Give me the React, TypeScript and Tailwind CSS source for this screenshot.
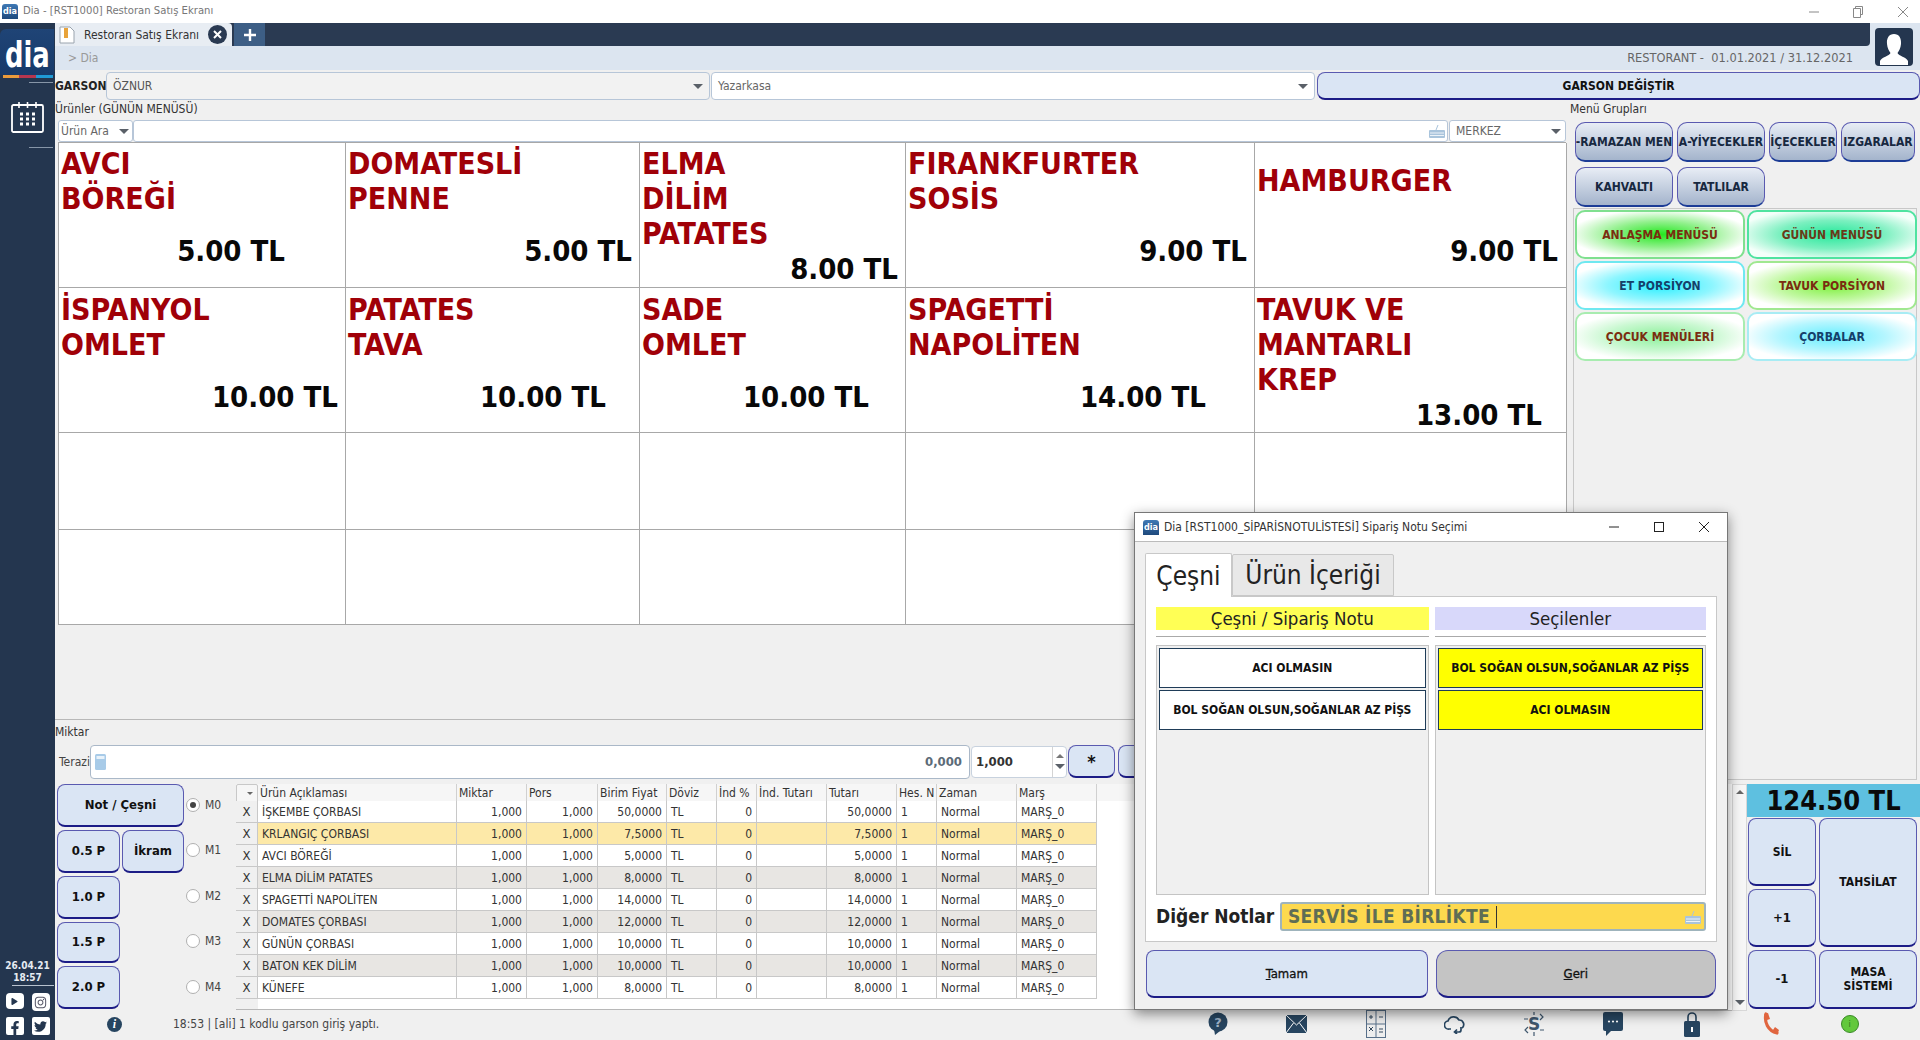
import { FaFacebookF, FaInstagram, FaPlay, FaTwitter } from "react-icons/fa";

const products = [
  { lines: ["AVCI", "BÖREĞİ"], price: "5.00 TL", cls: "pr-[60px]", top: "mt-0", gap: "mt-[18px]" },
  { lines: ["DOMATESLİ", "PENNE"], price: "5.00 TL", cls: "pr-[7px]", top: "mt-0", gap: "mt-[18px]" },
  { lines: ["ELMA", "DİLİM", "PATATES"], price: "8.00 TL", cls: "pr-[7px]", top: "mt-0", gap: "mt-px" },
  { lines: ["FIRANKFURTER", "SOSİS"], price: "9.00 TL", cls: "pr-[7px]", top: "mt-0", gap: "mt-[18px]" },
  { lines: ["HAMBURGER"], price: "9.00 TL", cls: "pr-[8px]", top: "mt-[17px]", gap: "mt-[36px]" },
  { lines: ["İSPANYOL", "OMLET"], price: "10.00 TL", cls: "pr-[7px]", top: "mt-px", gap: "mt-[18px]" },
  { lines: ["PATATES", "TAVA"], price: "10.00 TL", cls: "pr-[33px]", top: "mt-px", gap: "mt-[18px]" },
  { lines: ["SADE", "OMLET"], price: "10.00 TL", cls: "pr-[36px]", top: "mt-px", gap: "mt-[18px]" },
  { lines: ["SPAGETTİ", "NAPOLİTEN"], price: "14.00 TL", cls: "pr-[48px]", top: "mt-px", gap: "mt-[18px]" },
  { lines: ["TAVUK VE", "MANTARLI", "KREP"], price: "13.00 TL", cls: "pr-[24px]", top: "mt-px", gap: "mt-px" },
];

const groups = [
  [
    { label: "-RAMAZAN MEN", cls: "w-[98px] justify-center" },
    { label: "A-YİYECEKLER", cls: "w-[88px] justify-center" },
    { label: "İÇECEKLER", cls: "w-[68px] justify-center" },
    { label: "IZGARALAR", cls: "w-[74px] justify-center" },
  ],
  [
    { label: "KAHVALTI", cls: "w-[98px] justify-center" },
    { label: "TATLILAR", cls: "w-[88px] justify-center" },
  ],
];

const menus = [
  { label: "ANLAŞMA MENÜSÜ", cls: "border-[#7fe08f] bg-[radial-gradient(ellipse_at_center,#22e81e_0%,#8ff08a_40%,#ffffff_78%)] text-[#7a2c10]" },
  { label: "GÜNÜN MENÜSÜ", cls: "border-[#4fe3a0] bg-[radial-gradient(ellipse_at_center,#25e89a_0%,#7cf0c0_45%,#f4fffa_82%)] text-[#6a3a18]" },
  { label: "ET PORSİYON", cls: "border-[#6fe8f0] bg-[radial-gradient(ellipse_at_center,#27efff_0%,#8ef6ff_45%,#ffffff_80%)] text-[#15406a]" },
  { label: "TAVUK PORSİYON", cls: "border-[#a0e890] bg-[radial-gradient(ellipse_at_center,#7cf03a_0%,#c0f8a0_45%,#ffffff_80%)] text-[#7a2c10]" },
  { label: "ÇOCUK MENÜLERİ", cls: "border-[#a8ecb0] bg-[radial-gradient(ellipse_at_center,#8cf09a_0%,#c8f8d0_45%,#ffffff_78%)] text-[#7a2c10]" },
  { label: "ÇORBALAR", cls: "border-[#a8ecf4] bg-[radial-gradient(ellipse_at_center,#66eeff_0%,#b4f6ff_45%,#ffffff_78%)] text-[#15406a]" },
];

const columns = ["Ürün Açıklaması", "Miktar", "Pors", "Birim Fiyat", "Döviz", "İnd %", "İnd. Tutarı", "Tutarı", "Hes. N", "Zaman", "Marş"];

const orders = [
  { name: "İŞKEMBE ÇORBASI", price: "50,0000", bg: "bg-white" },
  { name: "KRLANGIÇ ÇORBASI", price: "7,5000", bg: "bg-[#fde9a8]" },
  { name: "AVCI BÖREĞİ", price: "5,0000", bg: "bg-white" },
  { name: "ELMA DİLİM PATATES", price: "8,0000", bg: "bg-[#e8e6e3]" },
  { name: "SPAGETTİ NAPOLİTEN", price: "14,0000", bg: "bg-white" },
  { name: "DOMATES ÇORBASI", price: "12,0000", bg: "bg-[#e8e6e3]" },
  { name: "GÜNÜN ÇORBASI", price: "10,0000", bg: "bg-white" },
  { name: "BATON KEK DİLİM", price: "10,0000", bg: "bg-[#e8e6e3]" },
  { name: "KÜNEFE", price: "8,0000", bg: "bg-white" },
];

const gridCols = "grid grid-cols-[22px_199px_70px_71px_69px_50px_40px_70px_70px_40px_80px_80px]";
const cell = "flex items-center border-r border-b border-[#c8c8c8] px-1 text-[12px] text-[#333] truncate";
const blueBtn = "flex items-center justify-center rounded-lg border border-[#5a5ab0] border-b-2 border-b-[#1c1c86] bg-[#dae5f4] font-bold text-[#111]";
const Tri = () => <span className="block h-0 w-0 border-x-[5px] border-t-[5px] border-x-transparent border-t-[#5a6068]" />;

function DiaMark({ className }: { className: string }) {
  return (
    <div className={`flex items-center justify-center rounded-t-[3px] bg-gradient-to-b from-[#3f79b5] to-[#1f4a7d] font-bold leading-none text-white ${className}`}>
      dia
    </div>
  );
}

function Keyboard({ color = "#a9c4dc" }: { color?: string }) {
  return (
    <svg width="16" height="14" viewBox="0 0 16 14">
      <path d="M9 1 L7 6" stroke={color} fill="none" />
      <rect x="0" y="6" width="16" height="8" rx="1" fill={color} />
      <path d="M1 9h14M1 11.5h14" stroke="#ffffff" strokeWidth="0.8" />
    </svg>
  );
}

function Radio({ label, on }: { label: string; on?: boolean }) {
  return (
    <div className="flex h-[45.5px] items-center">
      <span className="ml-[2px] flex h-[14px] w-[14px] items-center justify-center rounded-full border border-[#b0b0b0] bg-white">
        {on && <span className="h-[6px] w-[6px] rounded-full bg-[#444]" />}
      </span>
      <span className="ml-[5px] text-[12px] text-[#444]">{label}</span>
    </div>
  );
}

function StatusIcons() {
  const navy = "#274560";
  return (
    <div className="flex items-center">
      <div className="flex w-[79px] justify-center">
        <svg width="20" height="24" viewBox="0 0 20 24">
          <circle cx="10" cy="10" r="9.5" fill={navy} />
          <path d="M6 17l1 6 5-4z" fill={navy} />
          <text x="10" y="15" textAnchor="middle" fontSize="13" fontWeight="bold" fill="#9fb4c8" fontFamily="DejaVu Sans">?</text>
        </svg>
      </div>
      <div className="flex w-[79px] justify-center">
        <svg width="21" height="18" viewBox="0 0 21 18">
          <rect width="21" height="18" fill={navy} />
          <path d="M0 0l10.5 10L21 0M0 18l7.5-10M21 18l-7.5-10" stroke="#fff" fill="none" />
        </svg>
      </div>
      <div className="flex w-[79px] justify-center">
        <svg width="20" height="28" viewBox="0 0 20 28">
          <rect x="0.5" y="0.5" width="19" height="27" fill="#eee" stroke="#58708a" />
          <path d="M10 0v28M0 14h20" stroke="#58708a" />
          <path d="M3 7h4M5 5v4M13 7h4M3 21l4-4M7 21l-4-4M13 19h4M13 22h4" stroke="#33485e" />
        </svg>
      </div>
      <div className="flex w-[79px] justify-center">
        <svg width="22" height="20" viewBox="0 0 22 20" fill="none" stroke={navy} strokeWidth="1.7">
          <path d="M7 15H5a4 4 0 0 1-1-8 6 6 0 0 1 11-1 4.5 4.5 0 0 1 3 8" />
          <path d="M17 13v3a2 2 0 0 1-2 2h-4M13 15.500l-2.500 2.500 2.500 2" />
        </svg>
      </div>
      <div className="flex w-[79px] justify-center">
        <svg width="22" height="24" viewBox="0 0 22 24" fill="none" stroke="#40586e" strokeWidth="1.2">
          <text x="11" y="18" textAnchor="middle" fontSize="17" fontWeight="bold" fill="#40586e" stroke="none" fontFamily="DejaVu Sans">S</text>
          <path d="M1 7h4M17 2l3 3-3 3M5 15l-3 3 3 3M17 18h4M11 0v3M11 20v4" />
        </svg>
      </div>
      <div className="flex w-[79px] justify-center">
        <svg width="20" height="24" viewBox="0 0 20 24">
          <rect width="20" height="19" rx="2" fill={navy} />
          <path d="M3 18v6l6-6z" fill={navy} />
          <circle cx="6" cy="9.500" r="1.100" fill="#fff" />
          <circle cx="10" cy="9.500" r="1.100" fill="#fff" />
          <circle cx="14" cy="9.500" r="1.100" fill="#fff" />
        </svg>
      </div>
      <div className="flex w-[79px] justify-center">
        <svg width="16" height="26" viewBox="0 0 16 26">
          <path d="M4 11V6a4 4 0 0 1 8 0v5" fill="none" stroke={navy} strokeWidth="1.600" />
          <rect y="10" width="16" height="16" rx="1.500" fill={navy} />
          <rect x="7" y="16" width="2" height="5" fill="#fff" />
        </svg>
      </div>
      <div className="flex w-[79px] justify-center">
        <svg width="18" height="24" viewBox="0 0 18 24" fill="none">
          <path d="M4 2C2 10 6 19 15 21" stroke="#e0653f" strokeWidth="3.200" strokeLinecap="round" />
          <path d="M2 2l4-1 2 6-3 1zM11 18l2-3 4 3-1.500 4z" fill="#e0653f" />
        </svg>
      </div>
      <div className="flex w-[79px] justify-center">
        <span className="flex h-[18px] w-[18px] items-center justify-center rounded-full border border-[#3a8a28] bg-[#62c83c] text-[9px] leading-none text-[#2f7a1e]">i</span>
      </div>
    </div>
  );
}

function OrderDialog() {
  const notes = ["ACI OLMASIN", "BOL SOĞAN OLSUN,SOĞANLAR AZ PİŞS"];
  return (
    <div className="absolute left-[1134px] top-[512px] flex h-[498px] w-[594px] flex-col border border-[#777] bg-[#f0f0f0] shadow-[0_4px_12px_rgba(0,0,0,0.45)]">
      <div className="flex h-[29px] shrink-0 items-center border-b border-[#bbb] bg-white pl-[8px]">
        <DiaMark className="h-[15px] w-[16px] text-[9px]" />
        <span className="ml-[5px] flex-1 text-[12px] text-[#333]">Dia [RST1000_SİPARİSNOTULİSTESİ] Sipariş Notu Seçimi</span>
        <svg className="mr-[33px]" width="12" height="12" viewBox="0 0 12 12"><path d="M1 6h10" stroke="#222" /></svg>
        <svg className="mr-[32px]" width="12" height="12" viewBox="0 0 12 12"><rect x="1.500" y="1.500" width="9" height="9" fill="none" stroke="#222" /></svg>
        <svg className="mr-[16px]" width="14" height="14" viewBox="0 0 14 14"><path d="M2 2l10 10M12 2L2 12" stroke="#222" /></svg>
      </div>
      <div className="ml-[10px] mt-[10px] flex h-[44px] items-end text-[26px] leading-none text-[#222]">
        <div className="z-10 -mb-px flex h-[44px] w-[87px] items-center justify-center rounded-t-[2px] border border-b-0 border-[#c8c8c8] bg-white">Çeşni</div>
        <div className="flex h-[42px] w-[162px] items-center justify-center rounded-t-[2px] border border-[#c8c8c8] bg-[#e8e8e8]">Ürün İçeriği</div>
      </div>
      <div className="mx-[10px] flex h-[346px] flex-col border border-[#c8c8c8] bg-white px-[10px] pt-[10px]">
        <div className="flex gap-[6px]">
          <div className="flex w-[273px] flex-col">
            <div className="flex h-[23px] items-center justify-center bg-[#ffff55] text-[18.5px] text-[#222]">Çeşni / Sipariş Notu</div>
            <div className="mt-[6px] h-px bg-[#aaa]" />
          </div>
          <div className="flex w-[272px] flex-col">
            <div className="flex h-[23px] items-center justify-center bg-[#d8d8fa] text-[18.5px] text-[#222]">Seçilenler</div>
            <div className="mt-[6px] h-px bg-[#aaa]" />
          </div>
        </div>
        <div className="mt-[8px] flex gap-[6px]">
          <div className="flex h-[250px] w-[273px] flex-col gap-[2px] border border-[#c4c4c4] bg-[#f0f0f0] p-[2px]">
            {notes.map((n) => (
              <div key={n} className="flex h-[40px] items-center justify-center border border-[#1f3c58] bg-white text-[12px] font-bold text-[#111]">{n}</div>
            ))}
          </div>
          <div className="flex h-[250px] w-[272px] flex-col gap-[2px] border border-[#c4c4c4] bg-[#f0f0f0] p-[2px]">
            {[notes[1], notes[0]].map((n) => (
              <div key={n} className="flex h-[40px] items-center justify-center border border-[#1f3c58] bg-[#ffff00] text-[12px] font-bold text-[#111]">{n}</div>
            ))}
          </div>
        </div>
        <div className="mt-[7px] flex items-center">
          <span className="w-[124px] text-[19px] font-bold text-[#222]">Diğer Notlar</span>
          <div className="flex h-[29px] w-[426px] items-center rounded-[3px] border-2 border-[#9fb4bc] bg-[#fdd94e] pl-[6px] pr-[3px]">
            <span className="text-[19px] font-bold tracking-[0.3px] text-[#5f6d55]">SERVİS İLE BİRLİKTE</span>
            <span className="ml-[6px] h-[22px] w-px bg-[#333]" />
            <span className="ml-auto"><Keyboard /></span>
          </div>
        </div>
      </div>
      <div className="mx-[11px] mt-[8px] flex gap-[8px]">
        <div className={`${blueBtn} h-[48px] w-[282px] rounded-[12px] text-[13px]`}><span className="font-normal [-webkit-text-stroke:0.3px_#111]"><u>T</u>amam</span></div>
        <div className="flex h-[48px] w-[281px] items-center justify-center rounded-[12px] border border-[#5a5ab0] border-b-2 border-b-[#1c1c86] bg-[#c4c4c4] text-[13px] text-[#111]"><span className="[-webkit-text-stroke:0.3px_#111]"><u>G</u>eri</span></div>
      </div>
    </div>
  );
}

export default function App() {
  return (
    <div className="relative flex h-[1040px] w-[1920px] flex-col overflow-hidden bg-[#f0f0f0] font-['DejaVu_Sans_Condensed','DejaVu_Sans',sans-serif]">
      {/* Title bar */}
      <div className="flex h-[23px] shrink-0 items-center bg-white pl-[2px]">
        <DiaMark className="h-[15px] w-[16px] text-[9px]" />
        <span className="ml-[5px] flex-1 text-[11.2px] text-[#777]">Dia - [RST1000] Restoran Satış Ekranı</span>
        <svg className="mr-[34px]" width="10" height="10" viewBox="0 0 10 10"><path d="M0 5h10" stroke="#888" /></svg>
        <svg className="mr-[34px]" width="10" height="12" viewBox="0 0 10 12" fill="none"><path d="M2.500 2.500V.5h7v8h-2M.5 2.500h7v9h-7z" stroke="#888" /></svg>
        <svg className="mr-[11px]" width="12" height="12" viewBox="0 0 12 12"><path d="M1 1l10 10M11 1L1 11" stroke="#888" /></svg>
      </div>

      <div className="flex min-h-0 flex-1">
        {/* Sidebar */}
        <div className="flex w-[55px] shrink-0 flex-col bg-[#24364f]">
          <div className="mt-[6px] flex h-[46px] w-[54px] items-center justify-center rounded-tl-[6px] bg-gradient-to-b from-[#1f4476] to-[#173a6a] pt-[6px]">
            <span className="scale-x-[0.82] text-[35px] font-bold leading-none text-white">dia</span>
          </div>
          <div className="flex h-[3px] w-[50px] self-center">
            <span className="flex-1 bg-[#e89a3c]" />
            <span className="flex-1 bg-[#b5364f]" />
            <span className="flex-1 bg-[#1f9ad6]" />
          </div>
          <div className="ml-[29px] mt-[4px] h-px w-[24px] bg-[#8796a8]" />
          <div className="ml-[11px] mt-[18px]">
            <svg width="33" height="32" viewBox="0 0 33 32" fill="none" stroke="#fff">
              <rect x="1" y="4" width="31" height="27" rx="1.500" strokeWidth="1.800" />
              <path d="M8 1v6M16.500 1v6M25 1v6" strokeWidth="1.600" />
              <path d="M9 13h3M15 13h3M21 13h3M9 18h3M15 18h3M21 18h3M9 23h3M15 23h3M21 23h3" strokeWidth="3" />
            </svg>
          </div>
          <div className="ml-[29px] mt-[14px] h-px w-[24px] bg-[#8796a8]" />
          <div className="mt-auto flex flex-col items-center pb-[5px]">
            <span className="text-[10px] font-bold leading-[12px] text-[#e6ebf2]">26.04.21</span>
            <span className="text-[10px] font-bold leading-[12px] text-[#e6ebf2]">18:57</span>
            <div className="ml-[10px] mt-[1px] h-px w-[42px] bg-[#b8c2cf]" />
            <div className="mt-[7px] grid grid-cols-[18px_18px] gap-x-[8px] gap-y-[6px]">
              <span className="flex h-[16px] items-center justify-center rounded-[4px] bg-white text-[#24364f]"><FaPlay size={7} /></span>
              <span className="flex h-[18px] items-center justify-center rounded-[4px] bg-white text-[#556]"><FaInstagram size={13} /></span>
              <span className="flex h-[18px] items-end justify-center rounded-[2px] bg-white text-[#24364f]"><FaFacebookF size={14} /></span>
              <span className="flex h-[18px] items-center justify-center rounded-[2px] bg-white text-[#24364f]"><FaTwitter size={13} /></span>
            </div>
          </div>
        </div>

        {/* Main */}
        <div className="flex min-w-0 flex-1 flex-col">
          <div className="flex h-[47px] shrink-0 bg-[#dce5f0]">
            <div className="flex min-w-0 flex-1 flex-col">
              <div className="flex h-[23px] items-start rounded-br-[4px] bg-[#2a3a52]">
                <div className="flex h-[23px] w-[177px] items-center rounded-tr-[4px] bg-[#e8edf3] pl-[4px]">
                  <svg width="16" height="18" viewBox="0 0 16 18">
                    <path d="M1 1h10l4 4v12H1z" fill="#fff" stroke="#9aa4ae" />
                    <rect x="5" y="2" width="4" height="10" fill="#e8a33a" />
                  </svg>
                  <span className="ml-[9px] flex-1 text-[12px] text-[#333]">Restoran Satış Ekranı</span>
                  <span className="mr-[5px] flex h-[19px] w-[19px] items-center justify-center rounded-full bg-[#2a3a52]">
                    <svg width="9" height="9" viewBox="0 0 9 9"><path d="M1 1l7 7M8 1L1 8" stroke="#fff" strokeWidth="2" /></svg>
                  </span>
                </div>
                <div className="ml-[2px] flex h-[23px] w-[31px] items-center justify-center bg-[#3d5e85]">
                  <svg width="14" height="14" viewBox="0 0 14 14"><path d="M7 1v12M1 7h12" stroke="#fff" strokeWidth="2.400" /></svg>
                </div>
              </div>
              <div className="flex h-[24px] items-center pl-[13px] pr-[17px] text-[#666]">
                <span className="text-[12px] text-[#999]">&gt; Dia</span>
                <span className="ml-auto text-[12.7px]">RESTORANT -&nbsp; 01.01.2021 / 31.12.2021</span>
              </div>
            </div>
            <div className="flex w-[50px] shrink-0 pl-[5px] pt-[5px]">
              <div className="relative z-10 flex h-[38px] w-[38px] items-end justify-center overflow-hidden rounded-[4px] bg-[#24364f]">
                <svg width="32" height="34" viewBox="0 0 32 34" fill="#fff">
                  <path d="M16 2c5 0 7.500 4 7 10-.3 4-2 7-3.500 9 1 3 9 4 10.500 8v4H2v-4c1.500-4 9.500-5 10.500-8C11 19 9.300 16 9 12c-.5-6 2-10 7-10z" />
                </svg>
              </div>
            </div>
          </div>

          {/* Waiter row */}
          <div className="flex h-[30px] shrink-0 items-center pt-[2px]">
            <span className="w-[51px] text-[12px] font-bold text-[#222]">GARSON</span>
            <div className="flex h-[28px] w-[604px] items-center rounded-[4px] border border-[#b7c6d8] bg-[#f2f2f2] pl-[6px] pr-[6px] text-[12px] text-[#555]">
              ÖZNUR<span className="ml-auto"><Tri /></span>
            </div>
            <div className="ml-px flex h-[28px] w-[604px] items-center rounded-[4px] border border-[#b7c6d8] bg-white pl-[6px] pr-[6px] text-[12px] text-[#666]">
              Yazarkasa<span className="ml-auto"><Tri /></span>
            </div>
            <div className={`${blueBtn} ml-[2px] h-[28px] w-[603px] rounded-[6px] text-[12px]`}>GARSON DEĞİŞTİR</div>
          </div>

          <div className="flex min-h-0 flex-1">
            {/* Products + order */}
            <div className="flex w-[1515px] shrink-0 flex-col">
              <div className="flex h-[20px] items-center pb-[2px] text-[12px] text-[#333]">Ürünler (GÜNÜN MENÜSÜ)</div>
              <div className="ml-[3px] flex h-[22px] shrink-0">
                <div className="flex w-[75px] items-center rounded-[3px] border border-[#b7c6d8] bg-white pl-[2px] pr-[3px] text-[12px] text-[#666]">Ürün Ara<span className="ml-auto"><Tri /></span></div>
                <div className="flex w-[1315px] items-center justify-end rounded-[3px] border border-[#b7c6d8] bg-white pr-[2px]"><Keyboard /></div>
                <div className="ml-px flex w-[117px] items-center rounded-[3px] border border-[#b7c6d8] bg-white pl-[6px] pr-[4px] text-[12px] text-[#666]">MERKEZ<span className="ml-auto"><Tri /></span></div>
              </div>
              <div className="ml-[3px] grid w-[1508px] shrink-0 grid-cols-[287px_294px_266px_349px_312px] grid-rows-[145px_145px_97px_95px] border-l border-t border-[#a8a8a8]">
                {products.map((p, i) => (
                  <div key={i} className="flex flex-col overflow-hidden border-b border-r border-[#a8a8a8] bg-white pl-[2px] pt-[3px] font-bold">
                    <div className={`text-[30px] leading-[35px] text-[#a00008] ${p.top}`}>
                      {p.lines.map((l) => <div key={l}>{l}</div>)}
                    </div>
                    <div className={`text-right text-[29px] leading-[35px] text-[#080808] ${p.gap} ${p.cls}`}>{p.price}</div>
                  </div>
                ))}
                {Array.from({ length: 10 }).map((_, i) => (
                  <div key={i} className="border-b border-r border-[#a8a8a8] bg-white" />
                ))}
              </div>
              <div className="h-[95px] shrink-0 border-b border-[#b8b8b8]" />
              <div className="flex h-[24px] shrink-0 items-center text-[12px] text-[#333]">Miktar</div>
              <div className="flex h-[35px] shrink-0 items-center">
                <span className="ml-[4px] w-[31px] text-[12px] text-[#444]">Terazi</span>
                <div className="flex h-[34px] w-[880px] items-center rounded-[4px] border border-[#aab8c8] bg-white pr-[7px]">
                  <svg width="11" height="16" viewBox="0 0 11 16" className="ml-[4px]">
                    <rect width="11" height="16" rx="1.500" fill="#a8cbe8" />
                    <rect x="1.500" y="2" width="8" height="3" fill="#e8f2fa" />
                  </svg>
                  <span className="ml-auto text-[13px] font-bold text-[#5c6b78]">0,000</span>
                </div>
                <div className="ml-px flex h-[32px] w-[96px] items-center rounded-[4px] border border-[#c8d2de] bg-white pl-[4px] text-[13px] font-bold text-[#333]">
                  1,000
                  <span className="ml-auto flex h-full w-[14px] flex-col items-center justify-center gap-[6px] border-l border-[#d4d4d4]">
                    <span className="h-0 w-0 border-x-[4px] border-b-[4px] border-x-transparent border-b-[#777]" />
                    <Tri />
                  </span>
                </div>
                <div className={`${blueBtn} ml-px h-[33px] w-[47px] text-[18px]`}>*</div>
                <div className={`${blueBtn} ml-[3px] h-[33px] w-[47px]`} />
              </div>
              <div className="flex min-h-0 flex-1 pl-[2px] pt-[5px]">
                <div className="flex h-[225px] w-[127px] shrink-0 flex-col gap-[3px]">
                  <div className={`${blueBtn} h-[43px] text-[13px]`}>Not / Çeşni</div>
                  <div className="flex gap-[2px]">
                    <div className={`${blueBtn} h-[43px] w-[63px] text-[13px]`}>0.5 P</div>
                    <div className={`${blueBtn} h-[43px] w-[62px] text-[13px]`}>İkram</div>
                  </div>
                  <div className={`${blueBtn} h-[43px] w-[63px] text-[13px]`}>1.0 P</div>
                  <div className={`${blueBtn} h-[42px] w-[63px] text-[13px]`}>1.5 P</div>
                  <div className={`${blueBtn} h-[43px] w-[63px] text-[13px]`}>2.0 P</div>
                </div>
                <div className="-mt-[2px] w-[52px] shrink-0">
                  {["M0", "M1", "M2", "M3", "M4"].map((m, i) => <Radio key={m} label={m} on={i === 0} />)}
                </div>
                <div className="h-[226px] flex-1 border-b border-[#b8b8b8] bg-white">
                  <div className={`${gridCols} h-[17px] bg-[#f6f6f6]`}>
                    <div className="flex items-center justify-end rounded-t-[2px] border border-[#c8c8c8] pr-[4px]"><span className="h-0 w-0 border-x-[3px] border-t-[3px] border-x-transparent border-t-[#666]" /></div>
                    {columns.map((c) => (
                      <div key={c} className="flex items-center border-r border-[#d0d0d0] pl-[2px] text-[12px] text-[#333]">{c}</div>
                    ))}
                  </div>
                  {orders.map((o) => (
                    <div key={o.name} className={`${gridCols} h-[22px]`}>
                      <div className="flex items-center justify-center border-b border-r border-[#c8c8c8] bg-[#f0f0f0] text-[13px] text-[#333]">X</div>
                      <div className={`${cell} ${o.bg}`}>{o.name}</div>
                      <div className={`${cell} ${o.bg} justify-end`}>1,000</div>
                      <div className={`${cell} ${o.bg} justify-end`}>1,000</div>
                      <div className={`${cell} ${o.bg} justify-end`}>{o.price}</div>
                      <div className={`${cell} ${o.bg}`}>TL</div>
                      <div className={`${cell} ${o.bg} justify-end`}>0</div>
                      <div className={`${cell} ${o.bg}`} />
                      <div className={`${cell} ${o.bg} justify-end`}>{o.price}</div>
                      <div className={`${cell} ${o.bg}`}>1</div>
                      <div className={`${cell} ${o.bg}`}>Normal</div>
                      <div className={`${cell} ${o.bg}`}>MARŞ_0</div>
                    </div>
                  ))}
                  <div className="h-[10px] w-[22px] bg-[#f0f0f0]" />
                </div>
              </div>
            </div>

            {/* Menu groups + totals */}
            <div className="flex min-w-0 flex-1 flex-col">
              <div className="flex h-[20px] items-center pb-[2px] text-[12px] text-[#333]">Menü Grupları</div>
              <div className="flex h-[88px] shrink-0 flex-col gap-[5px] pl-[5px] pt-[2px]">
                {groups.map((row, r) => (
                  <div key={r} className="flex gap-[4px]">
                    {row.map((g) => (
                      <div key={g.label} className={`flex h-[40px] items-center overflow-hidden whitespace-nowrap rounded-[10px] border border-[#5a5ab0] border-b-2 border-b-[#1c3c96] bg-gradient-to-b from-[#e8edf5] to-[#a4b4cc] text-[12px] font-bold text-[#172840] ${g.cls}`}>{g.label}</div>
                    ))}
                  </div>
                ))}
              </div>
              <div className="ml-[3px] mr-[3px] h-[572px] shrink-0 border border-[#c8c8c8] bg-[#f0f0f0]">
                <div className="grid grid-cols-[170px_170px] gap-x-[2px] gap-y-[2px] pl-px pt-px">
                  {menus.map((m) => (
                    <div key={m.label} className={`flex h-[49px] items-center justify-center rounded-[10px] border-2 text-[12px] font-bold ${m.cls}`}>{m.label}</div>
                  ))}
                </div>
              </div>
              <div className="mt-[4px] flex h-[227px] shrink-0">
                <div className="w-[162px] shrink-0 border-b border-[#b8b8b8] bg-white" />
                <div className="flex w-[15px] shrink-0 flex-col items-center justify-between border border-[#d8d8d8] bg-[#f6f6f6] py-[5px]">
                  <span className="h-0 w-0 border-x-[4px] border-b-[4px] border-x-transparent border-b-[#666]" />
                  <Tri />
                </div>
                <div className="flex w-[173px] shrink-0 flex-col">
                  <div className="flex h-[33px] items-center justify-center bg-[#5ec0e0] text-[27px] font-bold leading-none text-[#0a0a0a]">124.50 TL</div>
                  <div className="mt-px grid grid-cols-[68px_98px] grid-rows-[68px_58px_59px] gap-[3px] pl-px">
                    <div className={`${blueBtn} text-[12px]`}>SİL</div>
                    <div className={`${blueBtn} row-span-2 text-[12px]`}>TAHSİLAT</div>
                    <div className={`${blueBtn} text-[13px]`}>+1</div>
                    <div className={`${blueBtn} text-[13px]`}>-1</div>
                    <div className={`${blueBtn} text-center text-[12px] leading-[14px]`}>MASA<br />SİSTEMİ</div>
                  </div>
                </div>
              </div>
            </div>
          </div>

          {/* Status bar */}
          <div className="flex h-[30px] shrink-0 items-center pb-[2px]">
            <span className="ml-[52px] flex h-[15px] w-[15px] items-center justify-center rounded-full bg-[#274560] font-['Liberation_Serif',serif] text-[12px] font-bold italic leading-none text-white">i</span>
            <span className="ml-[51px] text-[12px] text-[#444]">18:53 | [ali] 1 kodlu garson giriş yaptı.</span>
            <div className="ml-auto pr-[31px]"><StatusIcons /></div>
          </div>
        </div>
      </div>

      <OrderDialog />
    </div>
  );
}
